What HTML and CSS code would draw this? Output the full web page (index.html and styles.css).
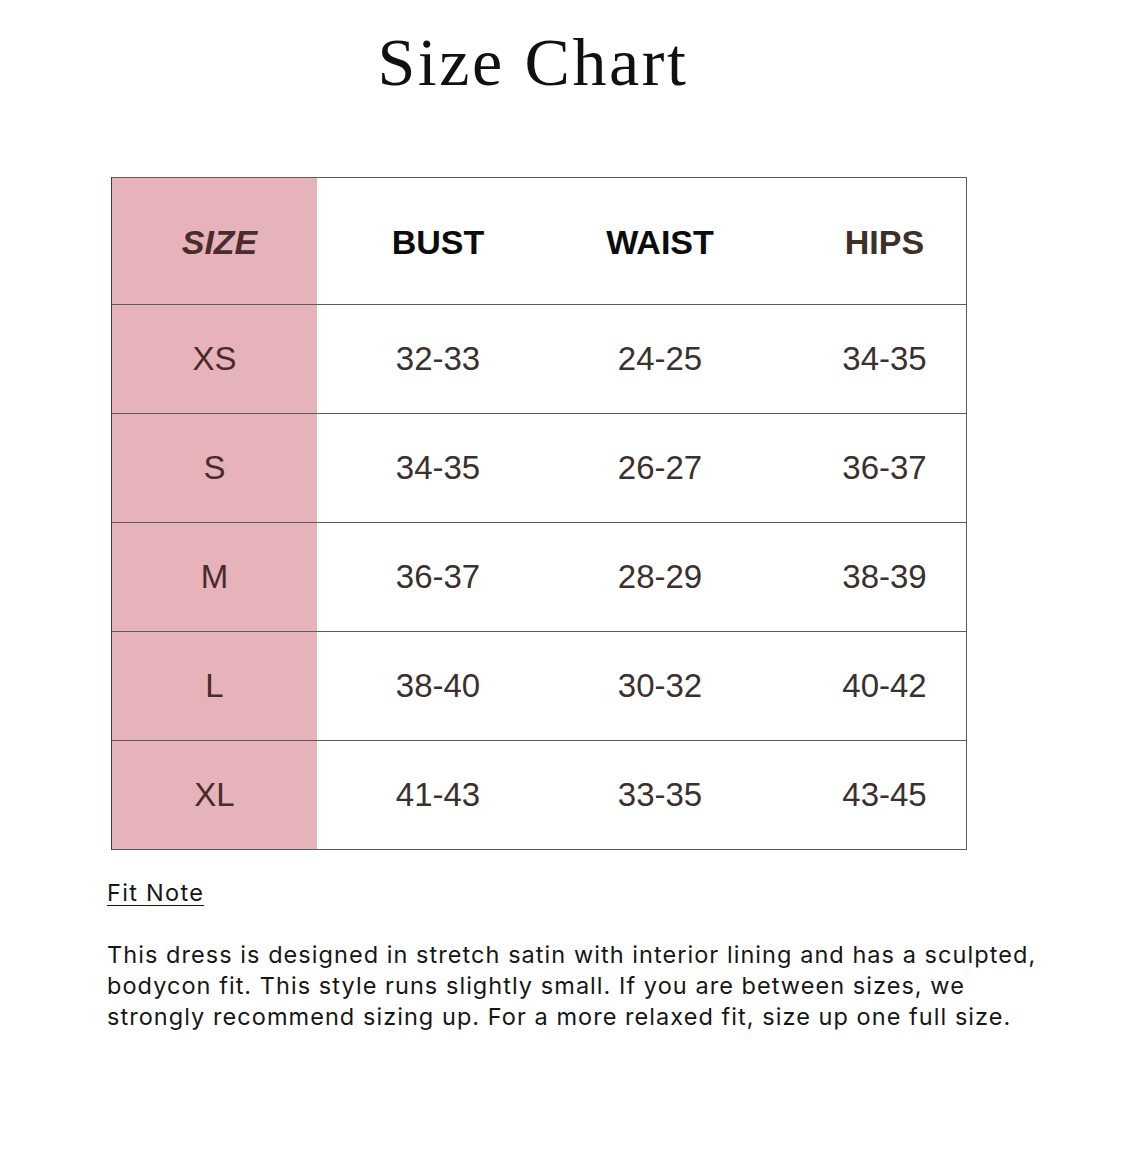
FILE: index.html
```html
<!DOCTYPE html>
<html lang="en">
<head>
<meta charset="utf-8">
<title>Size Chart</title>
<link rel="stylesheet" href="styles.css">
</head>
<body>
<main class="page">
  <h1 class="title">Size Chart</h1>
  <div class="chart">
    <div class="row head">
      <div class="cell size"><span class="size-label">SIZE</span></div>
      <div class="cell c-bust">BUST</div>
      <div class="cell c-waist">WAIST</div>
      <div class="cell c-hips hips-head">HIPS</div>
    </div>
    <div class="row">
      <div class="cell size">XS</div>
      <div class="cell c-bust">32-33</div>
      <div class="cell c-waist">24-25</div>
      <div class="cell c-hips">34-35</div>
    </div>
    <div class="row">
      <div class="cell size">S</div>
      <div class="cell c-bust">34-35</div>
      <div class="cell c-waist">26-27</div>
      <div class="cell c-hips">36-37</div>
    </div>
    <div class="row">
      <div class="cell size">M</div>
      <div class="cell c-bust">36-37</div>
      <div class="cell c-waist">28-29</div>
      <div class="cell c-hips">38-39</div>
    </div>
    <div class="row">
      <div class="cell size">L</div>
      <div class="cell c-bust">38-40</div>
      <div class="cell c-waist">30-32</div>
      <div class="cell c-hips">40-42</div>
    </div>
    <div class="row last">
      <div class="cell size">XL</div>
      <div class="cell c-bust">41-43</div>
      <div class="cell c-waist">33-35</div>
      <div class="cell c-hips">43-45</div>
    </div>
  </div>
  <section class="note">
    <h2 class="note-title">Fit Note</h2>
    <p class="note-text">This dress is designed in stretch satin with interior lining and has a sculpted, bodycon fit. This style runs slightly small. If you are between sizes, we strongly recommend sizing up. For a more relaxed fit, size up one full size.</p>
  </section>
</main>
</body>
</html>
```

FILE: styles.css
```css
html, body {
  margin: 0;
  padding: 0;
  background: #ffffff;
}

.page {
  width: 1130px;
  padding-top: 22px;
  padding-bottom: 40px;
}

.title {
  margin: 0 0 75px 111px;
  width: 856px;
  padding-right: 12px;
  box-sizing: border-box;
  text-align: center;
  font-family: "Liberation Serif", "DejaVu Serif", serif;
  font-weight: 400;
  font-size: 68px;
  line-height: 80px;
  letter-spacing: 2.6px;
  color: #111111;
}

.chart {
  margin-left: 111px;
  width: 856px;
  border: 1px solid #5a5a5a;
  border-left-color: #4a3434;
  box-sizing: border-box;
}

.row {
  display: grid;
  grid-template-columns: 205px 242px 202px 205px;
  height: 109px;
  box-sizing: border-box;
  border-bottom: 1px solid #5a5a5a;
}

.row.head {
  height: 127px;
}

.row.last {
  border-bottom: none;
  height: 108px;
}

.cell {
  display: flex;
  align-items: center;
  justify-content: center;
  font-family: "Liberation Sans", Arial, sans-serif;
  font-size: 33px;
  color: #3b302d;
}

.cell.size {
  background: #e6b3bb;
  color: #4a2a2a;
}

.c-hips {
  padding-left: 42px;
}

.head .cell {
  font-family: "Liberation Sans", Arial, sans-serif;
  font-weight: 700;
  font-size: 34px;
  color: #0c0c0c;
  padding-top: 2px;
}

.head .hips-head {
  color: #3d3029;
}

.head .cell.size {
  color: #4a2c2c;
  padding-left: 10px;
}

.size-label {
  font-style: italic;
}

.note {
  margin-left: 107px;
  padding-top: 28px;
  font-family: Inter, "Noto Sans", sans-serif;
  color: #161616;
}

.note-title {
  margin: 0;
  font-size: 23.5px;
  font-weight: 400;
  line-height: 30px;
  text-decoration: underline;
  text-underline-offset: 4px;
  text-decoration-thickness: 1px;
  letter-spacing: 1.3px;
}

.note-text {
  margin: 31px 0 0 0;
  width: 945px;
  font-size: 23.5px;
  line-height: 31px;
  letter-spacing: 1.05px;
}
```
